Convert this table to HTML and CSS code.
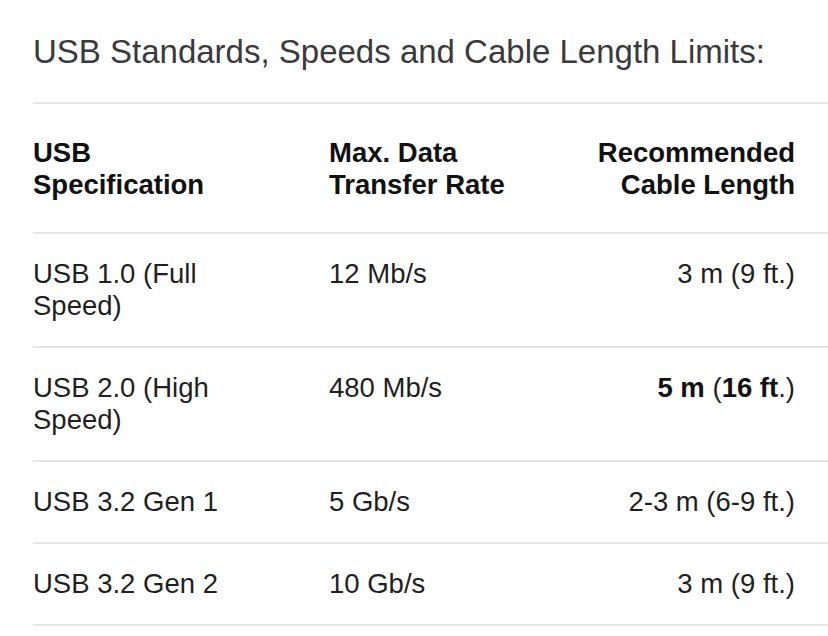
FILE: index.html
```html
<!DOCTYPE html>
<html lang="en">
<head>
<meta charset="utf-8">
<title>USB Standards</title>
<link rel="stylesheet" href="styles.css">
</head>
<body>
<section class="spec">
  <h2 class="spec-title">USB Standards, Speeds and Cable Length Limits:</h2>
  <table class="spec-table">
    <thead>
      <tr>
        <th class="c1">USB<br>Specification</th>
        <th class="c2">Max. Data<br>Transfer Rate</th>
        <th class="c3">Recommended<br>Cable Length</th>
      </tr>
    </thead>
    <tbody>
      <tr>
        <td class="c1">USB 1.0 (Full<br>Speed)</td>
        <td class="c2">12 Mb/s</td>
        <td class="c3">3 m (9 ft.)</td>
      </tr>
      <tr>
        <td class="c1">USB 2.0 (High<br>Speed)</td>
        <td class="c2">480 Mb/s</td>
        <td class="c3"><strong>5 m</strong> (<strong>16 ft</strong>.)</td>
      </tr>
      <tr>
        <td class="c1">USB 3.2 Gen 1</td>
        <td class="c2">5 Gb/s</td>
        <td class="c3">2-3 m (6-9 ft.)</td>
      </tr>
      <tr>
        <td class="c1">USB 3.2 Gen 2</td>
        <td class="c2">10 Gb/s</td>
        <td class="c3">3 m (9 ft.)</td>
      </tr>
    </tbody>
  </table>
</section>
</body>
</html>
```
FILE: styles.css
```css
html, body {
  margin: 0;
  padding: 0;
  background: #ffffff;
}

body {
  font-family: "Liberation Sans", Arial, Helvetica, sans-serif;
  color: #1f1f1f;
}

.spec {
  padding-left: 33px;
}

.spec-title {
  margin: 0;
  padding-top: 36px;
  padding-bottom: 34px;
  font-size: 33px;
  line-height: 32px;
  font-weight: normal;
  color: #3a3a3c;
  border-bottom: 2px solid #e6e6e6;
  white-space: nowrap;
}

.spec-table {
  width: 100%;
  border-collapse: collapse;
  font-size: 27.5px;
  line-height: 32px;
}

.spec-table th,
.spec-table td {
  padding: 24px 0;
  border-bottom: 2px solid #e6e6e6;
  vertical-align: top;
  text-align: left;
  white-space: nowrap;
}

.spec-table th {
  padding-top: 33px;
  padding-bottom: 31px;
  font-weight: bold;
  color: #111111;
}

.spec-table td {
  font-weight: normal;
}

.spec-table strong {
  font-weight: bold;
  color: #111111;
}

.spec-table .c1 {
  width: 296px;
}

.spec-table .c3 {
  text-align: right;
  padding-right: 33px;
}
```
